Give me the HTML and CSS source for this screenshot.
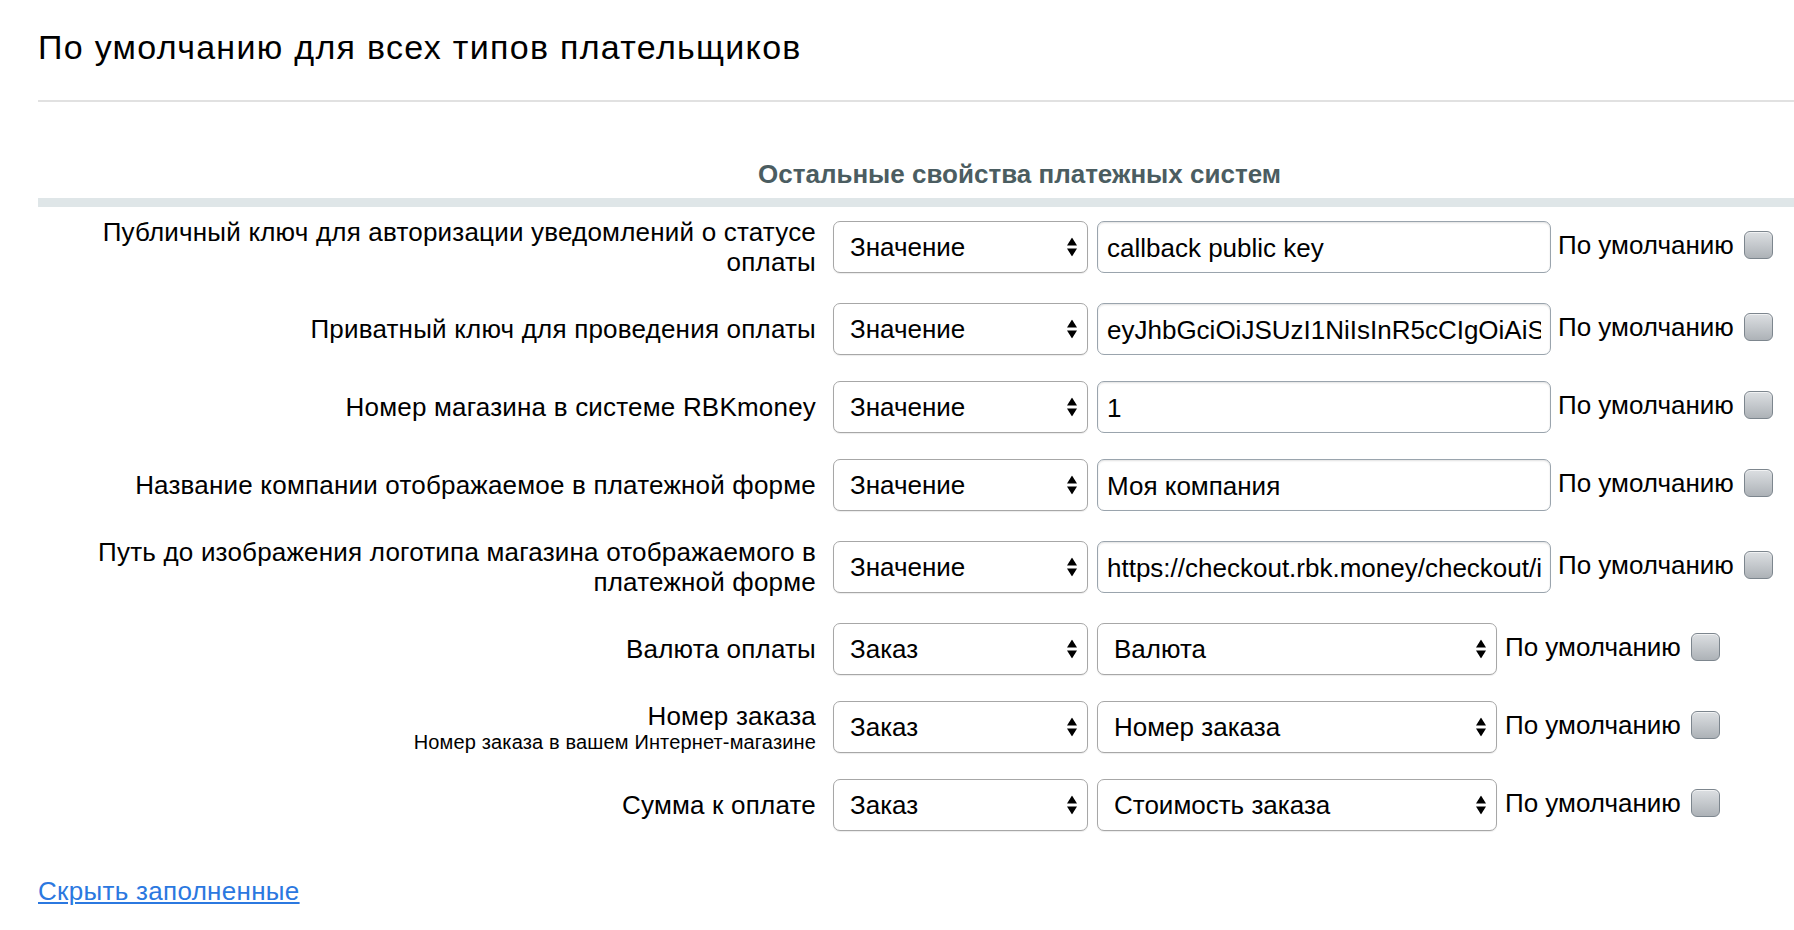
FILE: index.html
```html
<!DOCTYPE html>
<html lang="ru">
<head>
<meta charset="utf-8">
<title>Настройки платежной системы</title>
<link rel="stylesheet" href="styles.css">
</head>
<body>
<div class="page">
  <h1 class="title">По умолчанию для всех типов плательщиков</h1>
  <hr class="divider">
  <div class="section-head">Остальные свойства платежных систем</div>
  <div class="section-bar"></div>
  <div class="rows">
    <div class="row">
      <div class="label">Публичный ключ для авторизации уведомлений о статусе<br>оплаты</div>
      <div class="controls">
        <span class="select-wrap type"><select class="select"><option>Значение</option></select><svg class="arrows" width="10" height="19" viewBox="0 0 10 19"><path d="M5 0L10 8H0Z M0 11H10L5 19Z"/></svg></span>
        <input class="text-input" type="text" value="callback public key">
        <span class="default">По умолчанию</span><input class="check" type="checkbox">
      </div>
    </div>
    <div class="row">
      <div class="label">Приватный ключ для проведения оплаты</div>
      <div class="controls">
        <span class="select-wrap type"><select class="select"><option>Значение</option></select><svg class="arrows" width="10" height="19" viewBox="0 0 10 19"><path d="M5 0L10 8H0Z M0 11H10L5 19Z"/></svg></span>
        <input class="text-input" type="text" value="eyJhbGciOiJSUzI1NiIsInR5cCIgOiAiSldUIiwia2lkIiA6ICJKQWNzQjFPSGpmaW1">
        <span class="default">По умолчанию</span><input class="check" type="checkbox">
      </div>
    </div>
    <div class="row">
      <div class="label">Номер магазина в системе RBKmoney</div>
      <div class="controls">
        <span class="select-wrap type"><select class="select"><option>Значение</option></select><svg class="arrows" width="10" height="19" viewBox="0 0 10 19"><path d="M5 0L10 8H0Z M0 11H10L5 19Z"/></svg></span>
        <input class="text-input" type="text" value="1">
        <span class="default">По умолчанию</span><input class="check" type="checkbox">
      </div>
    </div>
    <div class="row">
      <div class="label">Название компании отображаемое в платежной форме</div>
      <div class="controls">
        <span class="select-wrap type"><select class="select"><option>Значение</option></select><svg class="arrows" width="10" height="19" viewBox="0 0 10 19"><path d="M5 0L10 8H0Z M0 11H10L5 19Z"/></svg></span>
        <input class="text-input" type="text" value="Моя компания">
        <span class="default">По умолчанию</span><input class="check" type="checkbox">
      </div>
    </div>
    <div class="row">
      <div class="label">Путь до изображения логотипа магазина отображаемого в<br>платежной форме</div>
      <div class="controls">
        <span class="select-wrap type"><select class="select"><option>Значение</option></select><svg class="arrows" width="10" height="19" viewBox="0 0 10 19"><path d="M5 0L10 8H0Z M0 11H10L5 19Z"/></svg></span>
        <input class="text-input" type="text" value="https://checkout.rbk.money/checkout/images/logo.png">
        <span class="default">По умолчанию</span><input class="check" type="checkbox">
      </div>
    </div>
    <div class="row">
      <div class="label">Валюта оплаты</div>
      <div class="controls">
        <span class="select-wrap type"><select class="select"><option>Заказ</option></select><svg class="arrows" width="10" height="19" viewBox="0 0 10 19"><path d="M5 0L10 8H0Z M0 11H10L5 19Z"/></svg></span>
        <span class="select-wrap value"><select class="select"><option>Валюта</option></select><svg class="arrows" width="10" height="19" viewBox="0 0 10 19"><path d="M5 0L10 8H0Z M0 11H10L5 19Z"/></svg></span>
        <span class="default">По умолчанию</span><input class="check" type="checkbox">
      </div>
    </div>
    <div class="row">
      <div class="label">Номер заказа<span class="hint">Номер заказа в вашем Интернет-магазине</span></div>
      <div class="controls">
        <span class="select-wrap type"><select class="select"><option>Заказ</option></select><svg class="arrows" width="10" height="19" viewBox="0 0 10 19"><path d="M5 0L10 8H0Z M0 11H10L5 19Z"/></svg></span>
        <span class="select-wrap value"><select class="select"><option>Номер заказа</option></select><svg class="arrows" width="10" height="19" viewBox="0 0 10 19"><path d="M5 0L10 8H0Z M0 11H10L5 19Z"/></svg></span>
        <span class="default">По умолчанию</span><input class="check" type="checkbox">
      </div>
    </div>
    <div class="row">
      <div class="label">Сумма к оплате</div>
      <div class="controls">
        <span class="select-wrap type"><select class="select"><option>Заказ</option></select><svg class="arrows" width="10" height="19" viewBox="0 0 10 19"><path d="M5 0L10 8H0Z M0 11H10L5 19Z"/></svg></span>
        <span class="select-wrap value"><select class="select"><option>Стоимость заказа</option></select><svg class="arrows" width="10" height="19" viewBox="0 0 10 19"><path d="M5 0L10 8H0Z M0 11H10L5 19Z"/></svg></span>
        <span class="default">По умолчанию</span><input class="check" type="checkbox">
      </div>
    </div>
  </div>
  <a class="toggle-link" href="#">Скрыть заполненные</a>
</div>
</body>
</html>
```

FILE: styles.css
```css
html, body {
  margin: 0;
  padding: 0;
  background: #fff;
}

body {
  font-family: "Liberation Sans", Arial, Helvetica, sans-serif;
  color: #000;
  overflow: hidden;
}

.page {
  padding-left: 38px;
}

.title {
  margin: 0;
  padding-top: 27px;
  font-size: 34px;
  line-height: 40px;
  letter-spacing: 1.3px;
  font-weight: normal;
}

.divider {
  border: none;
  height: 2px;
  background: #e1e1e1;
  margin: 33px 0 0;
}

.section-head {
  margin-top: 57px;
  padding-left: 720px;
  font-size: 26px;
  line-height: 30px;
  font-weight: bold;
  color: #4b5d61;
}

.section-bar {
  margin-top: 9px;
  height: 9px;
  background: #dfe6e8;
}

.rows {
  display: flex;
  flex-direction: column;
  margin-top: -3px;
}

.row {
  display: grid;
  grid-template-columns: 778px auto;
  column-gap: 17px;
  align-items: center;
  padding: 13px 0;
}

.label {
  text-align: right;
  font-size: 26px;
  line-height: 30px;
  letter-spacing: 0.2px;
}

.hint {
  display: block;
  font-size: 20px;
  line-height: 22px;
  letter-spacing: 0.15px;
}

.controls {
  display: flex;
  align-items: center;
}

.select-wrap {
  position: relative;
  display: inline-block;
  height: 52px;
  margin-right: 9px;
}

.select-wrap.type {
  width: 255px;
}

.select-wrap.value {
  width: 400px;
  margin-right: 8px;
}

.select {
  -webkit-appearance: none;
  appearance: none;
  width: 100%;
  height: 52px;
  box-sizing: border-box;
  border: 1px solid #a7a7a7;
  border-radius: 7px;
  background: #fff;
  box-shadow: 0 1px 1px rgba(0, 0, 0, 0.08);
  font-family: inherit;
  font-size: 26px;
  color: #000;
  padding: 0 30px 0 16px;
  outline: none;
}

.arrows {
  position: absolute;
  right: 11px;
  top: 50%;
  transform: translateY(-50%);
  fill: #000;
  pointer-events: none;
}

.text-input {
  width: 454px;
  height: 52px;
  box-sizing: border-box;
  border: 1px solid #9aa4ad;
  border-radius: 7px;
  box-shadow: inset 0 1px 2px rgba(0, 0, 0, 0.12);
  font-family: inherit;
  font-size: 26px;
  color: #000;
  padding: 2px 9px 0;
  margin-right: 7px;
  outline: none;
}

.default {
  font-size: 26px;
  line-height: 30px;
  margin-top: -4px;
}

.check {
  -webkit-appearance: none;
  appearance: none;
  width: 29px;
  height: 28px;
  margin: -4px 0 0 10px;
  box-sizing: border-box;
  border: 1px solid #7d868e;
  border-radius: 6px;
  background: linear-gradient(#dcdfe2, #adb2b7);
  box-shadow: inset 0 1px 0 rgba(255, 255, 255, 0.6);
}

.toggle-link {
  display: inline-block;
  margin-top: 32px;
  font-size: 26px;
  line-height: 30px;
  letter-spacing: 0.3px;
  color: #2b78e0;
  text-decoration: underline;
}
```
